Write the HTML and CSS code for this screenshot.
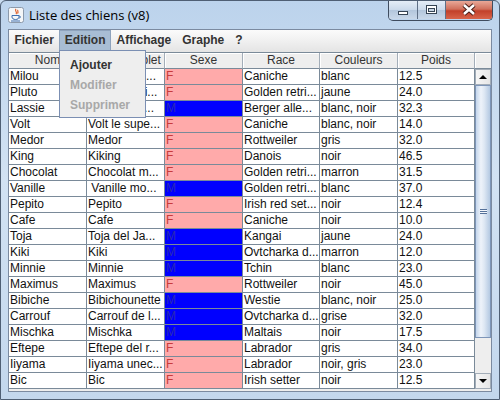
FILE: index.html
```html
<!DOCTYPE html>
<html lang="fr">
<head>
  <meta charset="UTF-8">
  <title>Liste des chiens (v8)</title>
  <link rel="stylesheet" href="styles.css">
</head>
<body>
  <div class="window">
    <div class="titlebar">
      <svg class="app-icon" width="16" height="16" viewBox="0 0 16 16">
        <rect x="0.5" y="0.5" width="15" height="15" rx="2" fill="#f4f6f8" stroke="#8c9aab"/>
        <path d="M8 2 C6 4 10 5 8 7 M10 3 C9 4 11 5 9.5 6.5" stroke="#e0602a" stroke-width="1.2" fill="none"/>
        <path d="M4 8.5 H11 V10 C11 11.5 9.5 12.5 7.5 12.5 C5.5 12.5 4 11.5 4 10 Z" fill="none" stroke="#3c6fb0" stroke-width="1"/>
        <path d="M11 9 C13 9 13 11 11 11" stroke="#3c6fb0" fill="none"/>
        <path d="M3 14 H12" stroke="#3c6fb0"/>
      </svg>
      <span class="title">Liste des chiens (v8)</span>
      <div class="caption-buttons">
        <div class="cap-btn cap-min">
          <svg width="28" height="18" viewBox="0 0 28 18">
            <rect x="9.5" y="10.5" width="9" height="3" fill="#fff" stroke="#364454"/>
          </svg>
        </div>
        <div class="cap-btn cap-max">
          <svg width="27" height="18" viewBox="0 0 27 18">
            <rect x="8.5" y="4.5" width="10" height="8" fill="#fff" stroke="#364454"/>
            <rect x="10.5" y="7.5" width="6" height="3" fill="#c9d6e4" stroke="#364454"/>
          </svg>
        </div>
        <div class="cap-btn cap-close">
          <svg width="46" height="18" viewBox="0 0 46 18">
            <path d="M18 4 L28 13 M28 4 L18 13" stroke="#4a1e18" stroke-width="4.5"/>
            <path d="M18 4 L28 13 M28 4 L18 13" stroke="#ffffff" stroke-width="2.5"/>
          </svg>
        </div>
      </div>
    </div>

    <div class="client">
      <div class="menubar">
        <span class="menu">Fichier</span>
        <span class="menu selected">Edition</span>
        <span class="menu">Affichage</span>
        <span class="menu">Graphe</span>
        <span class="menu">?</span>
      </div>

      <div class="scrollpane">
        <div class="table">
          <div class="row header">
            <div class="cell">Nom</div>
            <div class="cell">Nom complet</div>
            <div class="cell">Sexe</div>
            <div class="cell">Race</div>
            <div class="cell">Couleurs</div>
            <div class="cell">Poids</div>
          </div>
          <div class="row"><div class="cell">Milou</div><div class="cell">Milou le pe...</div><div class="cell sex-f">F</div><div class="cell">Caniche</div><div class="cell">blanc</div><div class="cell">12.5</div></div>
          <div class="row"><div class="cell">Pluto</div><div class="cell">Pluto le gui...</div><div class="cell sex-f">F</div><div class="cell">Golden retri...</div><div class="cell">jaune</div><div class="cell">24.0</div></div>
          <div class="row"><div class="cell">Lassie</div><div class="cell">Lassie fils ...</div><div class="cell sex-m">M</div><div class="cell">Berger alle...</div><div class="cell">blanc, noir</div><div class="cell">32.3</div></div>
          <div class="row"><div class="cell">Volt</div><div class="cell">Volt le supe...</div><div class="cell sex-f">F</div><div class="cell">Caniche</div><div class="cell">blanc, noir</div><div class="cell">14.0</div></div>
          <div class="row"><div class="cell">Medor</div><div class="cell">Medor</div><div class="cell sex-f">F</div><div class="cell">Rottweiler</div><div class="cell">gris</div><div class="cell">32.0</div></div>
          <div class="row"><div class="cell">King</div><div class="cell">Kiking</div><div class="cell sex-f">F</div><div class="cell">Danois</div><div class="cell">noir</div><div class="cell">46.5</div></div>
          <div class="row"><div class="cell">Chocolat</div><div class="cell">Chocolat m...</div><div class="cell sex-f">F</div><div class="cell">Golden retri...</div><div class="cell">marron</div><div class="cell">31.5</div></div>
          <div class="row"><div class="cell">Vanille</div><div class="cell">&nbsp;Vanille mo...</div><div class="cell sex-m">M</div><div class="cell">Golden retri...</div><div class="cell">blanc</div><div class="cell">37.0</div></div>
          <div class="row"><div class="cell">Pepito</div><div class="cell">Pepito</div><div class="cell sex-f">F</div><div class="cell">Irish red set...</div><div class="cell">noir</div><div class="cell">12.4</div></div>
          <div class="row"><div class="cell">Cafe</div><div class="cell">Cafe</div><div class="cell sex-f">F</div><div class="cell">Caniche</div><div class="cell">noir</div><div class="cell">10.0</div></div>
          <div class="row"><div class="cell">Toja</div><div class="cell">Toja del Ja...</div><div class="cell sex-m">M</div><div class="cell">Kangai</div><div class="cell">jaune</div><div class="cell">24.0</div></div>
          <div class="row"><div class="cell">Kiki</div><div class="cell">Kiki</div><div class="cell sex-m">M</div><div class="cell">Ovtcharka d...</div><div class="cell">marron</div><div class="cell">12.0</div></div>
          <div class="row"><div class="cell">Minnie</div><div class="cell">Minnie</div><div class="cell sex-m">M</div><div class="cell">Tchin</div><div class="cell">blanc</div><div class="cell">23.0</div></div>
          <div class="row"><div class="cell">Maximus</div><div class="cell">Maximus</div><div class="cell sex-f">F</div><div class="cell">Rottweiler</div><div class="cell">noir</div><div class="cell">45.0</div></div>
          <div class="row"><div class="cell">Bibiche</div><div class="cell">Bibichounette</div><div class="cell sex-m">M</div><div class="cell">Westie</div><div class="cell">blanc, noir</div><div class="cell">25.0</div></div>
          <div class="row"><div class="cell">Carrouf</div><div class="cell">Carrouf de l...</div><div class="cell sex-m">M</div><div class="cell">Ovtcharka d...</div><div class="cell">grise</div><div class="cell">32.0</div></div>
          <div class="row"><div class="cell">Mischka</div><div class="cell">Mischka</div><div class="cell sex-m">M</div><div class="cell">Maltais</div><div class="cell">noir</div><div class="cell">17.5</div></div>
          <div class="row"><div class="cell">Eftepe</div><div class="cell">Eftepe del r...</div><div class="cell sex-f">F</div><div class="cell">Labrador</div><div class="cell">gris</div><div class="cell">34.0</div></div>
          <div class="row"><div class="cell">Iiyama</div><div class="cell">Iiyama unec...</div><div class="cell sex-f">F</div><div class="cell">Labrador</div><div class="cell">noir, gris</div><div class="cell">23.0</div></div>
          <div class="row"><div class="cell">Bic</div><div class="cell">Bic</div><div class="cell sex-f">F</div><div class="cell">Irish setter</div><div class="cell">noir</div><div class="cell">12.5</div></div>
        </div>

        <div class="vscroll">
          <div class="corner"></div>
          <div class="arrow arrow-up"><span class="tri-up"></span></div>
          <div class="thumb"><span class="grip"></span></div>
          <div class="track"></div>
          <div class="arrow arrow-down"><span class="tri-down"></span></div>
        </div>
      </div>

      <!-- open "Edition" menu -->
      <div class="dropdown">
        <div class="item">Ajouter</div>
        <div class="item disabled">Modifier</div>
        <div class="item disabled">Supprimer</div>
      </div>
    </div>
  </div>
</body>
</html>
```

FILE: styles.css
```css
body {
  margin: 0;
  font-family: "Liberation Sans", Arial, sans-serif;
  background-color: #c8dbef;
}

.window {
  width: 500px;
  height: 400px;
  box-sizing: border-box;
  border: 1px solid #4f5f74;
  border-radius: 6px 6px 0 0;
  background: linear-gradient(to bottom, #bcd3ec, #d2e2f3 45%, #c3d7ed);
  display: flex;
  flex-direction: column;
  overflow: hidden;
}

/* title bar */
.titlebar {
  height: 28px;
  display: flex;
  align-items: flex-start;
  flex-shrink: 0;
}

.app-icon {
  margin: 6px 0 0 7px;
}

.title {
  margin: 6px 0 0 5px;
  font-family: "Open Sans", "Noto Sans", sans-serif;
  font-size: 13px;
  line-height: 16px;
  color: #000;
}

.caption-buttons {
  margin-left: auto;
  margin-right: 6px;
  display: flex;
  height: 19px;
  border: 1px solid #3f4c5f;
  border-top: none;
  border-radius: 0 0 5px 5px;
  overflow: hidden;
}

.cap-btn {
  height: 18px;
  display: flex;
}

.cap-min, .cap-max {
  background: linear-gradient(to bottom, #e4edf7, #cad9ea 50%, #b3c6dc 51%, #c9d8e9);
  border-right: 1px solid #5e6f86;
}

.cap-close {
  background: linear-gradient(to bottom, #e9a898, #d0705c 45%, #c2402a 55%, #d8644a);
}

/* window content */
.client {
  position: relative;
  flex: 1;
  margin: 0 7px 7px;
  border: 1px solid #7b8aa0;
  background-color: #eeeeee;
  display: flex;
  flex-direction: column;
}

.menubar {
  height: 22px;
  display: flex;
  align-items: stretch;
  background: linear-gradient(to bottom, #fbfbfb, #f0f0f0 50%, #e4e4e4);
  flex-shrink: 0;
}

.menu {
  padding: 0 5.5px;
  font-size: 12px;
  font-weight: bold;
  line-height: 21px;
  color: #333333;
}

.menu.selected {
  background-color: #a8bdd4;
  box-shadow: inset 1px 1px 0 #8ea3bd, inset -1px 0 0 #8ea3bd;
}

.scrollpane {
  flex: 1;
  display: flex;
  border-top: 1px solid #7a8a99;
  background-color: #eeeeee;
  overflow: hidden;
}

.table {
  width: 466px;
  background-color: #fff;
  align-self: flex-start;
}

.row {
  display: grid;
  grid-template-columns: 78px 78px 78px 77px 78px 77px;
}

.cell {
  height: 16px;
  box-sizing: border-box;
  border-right: 1px solid #7a8a99;
  border-bottom: 1px solid #7a8a99;
  padding-left: 1px;
  font-size: 12px;
  line-height: 15px;
  color: #111111;
  white-space: nowrap;
  overflow: hidden;
}

.header .cell {
  text-align: center;
  padding-left: 0;
  color: #333333;
  background-color: #eeeeee;
  border-right-color: #a3adb8;
  border-bottom-color: #7a8a99;
  box-shadow: inset 1px 1px 0 #ffffff;
}

.sex-f {
  background-color: #ffaaaa;
  color: #c83c3c;
}

.sex-m {
  background-color: #0000ff;
  color: #2a2ab0;
}

/* vertical scrollbar */
.vscroll {
  width: 16px;
  display: flex;
  flex-direction: column;
  padding-bottom: 2px;
}

.corner {
  height: 16px;
  box-sizing: border-box;
  background-color: #eeeeee;
  border-bottom: 1px solid #7a8a99;
  box-shadow: inset 1px 1px 0 #ffffff;
}

.arrow {
  height: 16px;
  box-sizing: border-box;
  border: 1px solid #a3adb8;
  background: linear-gradient(to right, #f6f6f6, #e6e6e6);
  display: flex;
  align-items: center;
  justify-content: center;
}

.tri-up {
  border-left: 4px solid transparent;
  border-right: 4px solid transparent;
  border-bottom: 4px solid #000;
}

.tri-down {
  border-left: 4px solid transparent;
  border-right: 4px solid transparent;
  border-top: 4px solid #000;
}

.thumb {
  height: 253px;
  box-sizing: border-box;
  border: 1px solid #7d95b8;
  background: linear-gradient(to right, #c4d6ec, #eef3fa 35%, #dde7f3 60%, #b4c9e2);
  display: flex;
  align-items: center;
  justify-content: center;
}

.grip {
  width: 7px;
  height: 5px;
  background: repeating-linear-gradient(to bottom, #55719a 0, #55719a 1px, #f4f7fb 1px, #f4f7fb 2px);
}

.track {
  flex: 1;
  background-color: #eeeeee;
}

/* popup menu */
.dropdown {
  position: absolute;
  left: 50px;
  top: 20px;
  width: 87px;
  height: 68px;
  box-sizing: border-box;
  padding-top: 4px;
  background-color: #eeeeee;
  border: 1px solid #7b8fb3;
}

.item {
  height: 20px;
  padding-left: 10px;
  font-size: 12px;
  font-weight: bold;
  line-height: 20px;
  color: #333333;
}

.item.disabled {
  color: #a8a8a8;
}
```
